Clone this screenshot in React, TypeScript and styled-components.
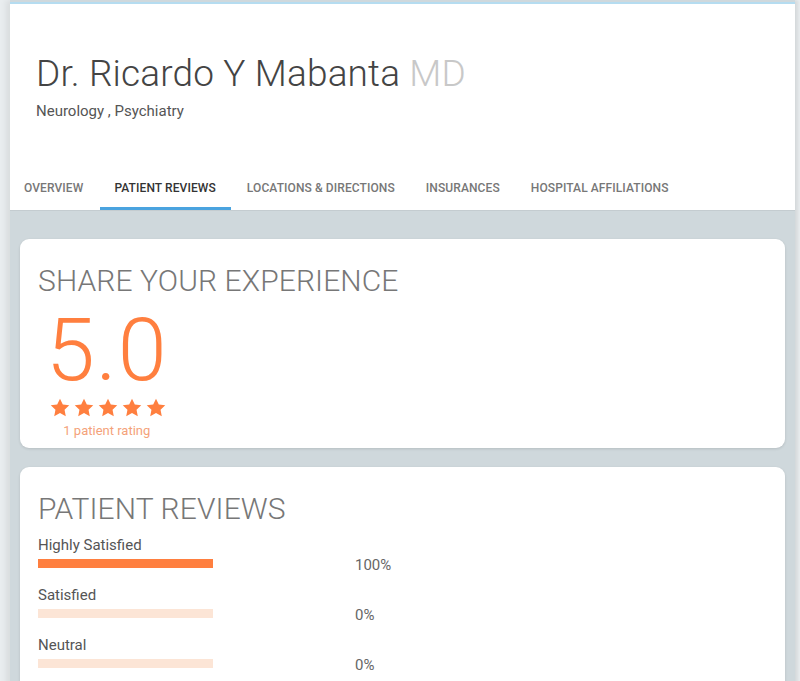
import React from "react";
import styled, { createGlobalStyle } from "styled-components";

const Global = createGlobalStyle`
  html, body { margin: 0; padding: 0; }
  body {
    background: #e9edef;
    font-family: Roboto, "Liberation Sans", Arial, sans-serif;
    overflow: hidden;
  }
`;

const Page = styled.div`
  margin-left: 10px;
  width: 785px;
  min-height: 681px;
  padding-top: 2px;
  background: #cfd8dc;
  box-shadow: -4px 0 6px rgba(0, 0, 0, 0.07), 3px 0 3px rgba(0, 0, 0, 0.08);
`;

const Header = styled.header`
  background: #fff;
  border-top: 2px solid #b5dcf0;
  border-bottom: 1px solid #c4ccd0;
  display: flex;
  flex-direction: column;
`;

const Identity = styled.div`
  padding: 48px 26px 0;
  height: 118px;
  box-sizing: border-box;
`;

const Name = styled.h1`
  margin: 0;
  font-weight: 300;
  font-size: 37px;
  line-height: 44px;
  color: #444;
  letter-spacing: 0.15px;
`;

const Suffix = styled.span`
  color: #c8c8c8;
`;

const Specialty = styled.div`
  margin-top: 6px;
  font-size: 15px;
  color: #555;
`;

const Tabs = styled.nav`
  display: flex;
  gap: 2px;
  height: 88px;
  align-items: flex-end;
`;

const Tab = styled.div<{ $active?: boolean }>`
  padding: 3px 15px 0 14px;
  height: 44px;
  display: flex;
  align-items: center;
  box-sizing: border-box;
  font-size: 12px;
  font-weight: 500;
  text-transform: uppercase;
  color: ${(p) => (p.$active ? "#333" : "#777")};
  border-bottom: 3px solid ${(p) => (p.$active ? "#4aa3df" : "transparent")};
  letter-spacing: 0.1px;
`;

const Content = styled.main`
  padding: 28px 10px 0;
  display: flex;
  flex-direction: column;
  gap: 19px;
`;

const Card = styled.section`
  background: #fff;
  border-radius: 9px;
  box-shadow: 0 1px 3px rgba(0, 0, 0, 0.12);
  padding: 24px 18px 10px;
`;

const CardTitle = styled.h2`
  margin: 0;
  font-weight: 300;
  font-size: 30px;
  line-height: 36px;
  color: #777;
  letter-spacing: 0.1px;
`;

const ScoreBlock = styled.div`
  display: inline-flex;
  flex-direction: column;
  align-items: center;
  margin-left: 8px;
`;

const Score = styled.div`
  font-weight: 300;
  font-size: 88px;
  line-height: 88px;
  color: #ff7f3f;
  margin-top: 7px;
  letter-spacing: 1px;
`;

const Stars = styled.div`
  display: flex;
  gap: 4px;
  margin-top: 4px;
  margin-left: 3px;
`;

const RatingNote = styled.div`
  font-size: 13px;
  color: #f4a27a;
  margin-top: 6px;
`;

const Rows = styled.div`
  display: flex;
  flex-direction: column;
  gap: 18px;
  margin-top: 9px;
  padding-bottom: 20px;
`;

const Row = styled.div`
  display: grid;
  grid-template-columns: 317px auto;
  align-items: end;
`;

const RowLabel = styled.div`
  font-size: 15px;
  color: #555;
  line-height: 18px;
`;

const Track = styled.div`
  width: 175px;
  height: 9px;
  background: #fce5d6;
  margin-top: 5px;
`;

const Fill = styled.div`
  height: 100%;
  background: #ff7f3f;
`;

const Percent = styled.div`
  font-size: 15px;
  color: #666;
  line-height: 18px;
  margin-bottom: -6px;
`;

const Star = () => (
  <svg width="20" height="19" viewBox="0 0 24 23">
    <path
      d="M12 0.8l3.4 7.1 7.8 1-5.7 5.4 1.5 7.7L12 18.2l-7 3.8 1.5-7.7L0.8 8.9l7.8-1z"
      fill="#ff7f3f"
    />
  </svg>
);

const reviews = [
  { label: "Highly Satisfied", value: 100 },
  { label: "Satisfied", value: 0 },
  { label: "Neutral", value: 0 },
];

export default function App() {
  return (
    <>
      <Global />
      <Page>
        <Header>
          <Identity>
            <Name>
              Dr. Ricardo Y Mabanta <Suffix>MD</Suffix>
            </Name>
            <Specialty>Neurology , Psychiatry</Specialty>
          </Identity>
          <Tabs>
            <Tab>Overview</Tab>
            <Tab $active>Patient Reviews</Tab>
            <Tab>Locations &amp; Directions</Tab>
            <Tab>Insurances</Tab>
            <Tab>Hospital Affiliations</Tab>
          </Tabs>
        </Header>
        <Content>
          <Card>
            <CardTitle>SHARE YOUR EXPERIENCE</CardTitle>
            <ScoreBlock>
              <Score>5.0</Score>
              <Stars>
                <Star />
                <Star />
                <Star />
                <Star />
                <Star />
              </Stars>
              <RatingNote>1 patient rating</RatingNote>
            </ScoreBlock>
          </Card>
          <Card>
            <CardTitle>PATIENT REVIEWS</CardTitle>
            <Rows>
              {reviews.map((r) => (
                <Row key={r.label}>
                  <div>
                    <RowLabel>{r.label}</RowLabel>
                    <Track>
                      <Fill style={{ width: `${r.value}%` }} />
                    </Track>
                  </div>
                  <Percent>{r.value}%</Percent>
                </Row>
              ))}
            </Rows>
          </Card>
        </Content>
      </Page>
    </>
  );
}
